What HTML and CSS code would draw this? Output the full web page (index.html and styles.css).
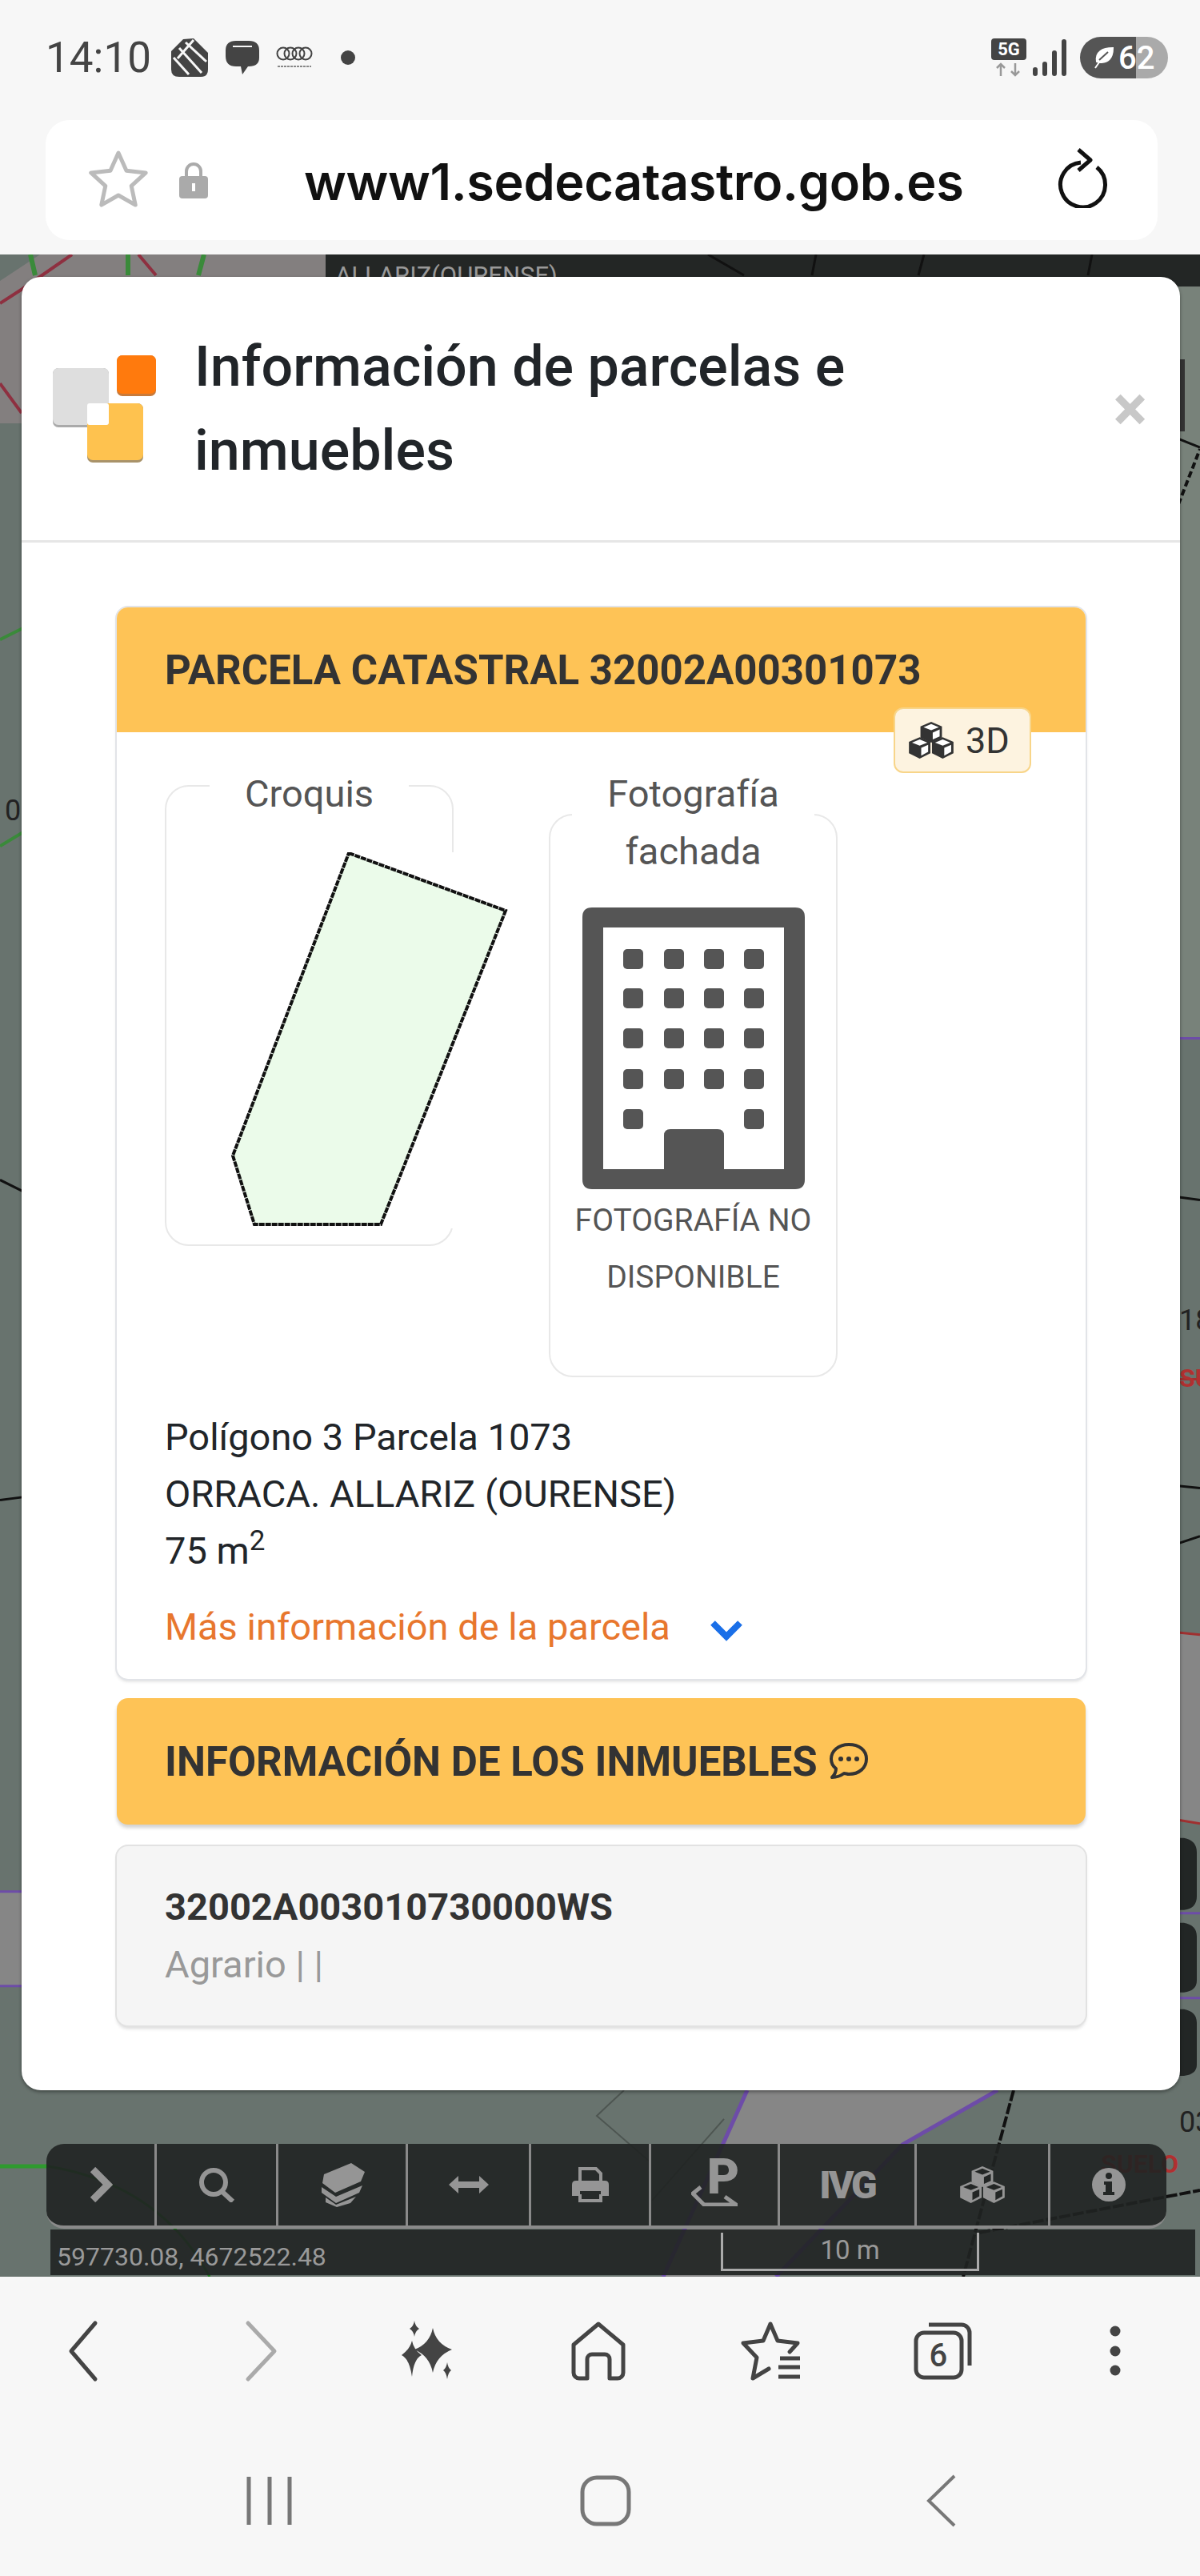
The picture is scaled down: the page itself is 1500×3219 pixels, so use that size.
FILE: index.html
```html
<!DOCTYPE html>
<html lang="es">
<head>
    <meta charset="UTF-8">
    <title>Información de parcelas e inmuebles</title>
    <link rel="stylesheet" href="styles.css">
</head>
<body>
<svg class="sprites" xmlns="http://www.w3.org/2000/svg">
    <symbol id="cubes" viewBox="0 0 60 50">
        <path d="M30 1 44 7V22L30 28 16 22V7Z" fill="currentColor"/>
        <path d="M30 4 40 8 30 12 20 8Z" class="cube-face"/>
        <path d="M32 15 41 11V20L32 24Z" class="cube-face"/>
        <path d="M15 21 29 27V42L15 49 1 42V27Z" fill="currentColor"/>
        <path d="M15 24 25 28 15 32 5 28Z" class="cube-face"/>
        <path d="M17 35 26 31V40L17 45Z" class="cube-face"/>
        <path d="M45 21 59 27V42L45 49 31 42V27Z" fill="currentColor"/>
        <path d="M45 24 55 28 45 32 35 28Z" class="cube-face"/>
        <path d="M47 35 56 31V40L47 45Z" class="cube-face"/>
    </symbol>
</svg>

<div class="screen">
    <header class="status-bar">
        <div class="status-left">
            <span class="clock">14:10</span>
            <svg class="ic-stack" viewBox="0 0 50 50"><path d="M17 2 30 1 48 19V40Q48 49 39 49H12Q2 49 2 40V17Z" fill="#444"/><path d="M20 6 46 30M12 13 40 44M5 25 24 46M30 3 10 26" stroke="#f7f7f7" stroke-width="3" fill="none"/></svg>
            <svg class="ic-bubble" viewBox="0 0 44 44"><path d="M14 1H30Q43 1 43 13V22Q43 33 30 33H29L22 43 20 33H14Q1 33 1 20V13Q1 1 14 1Z" fill="#444"/><path d="M10 8H34" stroke="#f7f7f7" stroke-width="2"/></svg>
            <svg class="ic-rings" viewBox="0 0 47 28"><g fill="none" stroke="#444" stroke-width="2"><circle cx="9" cy="9" r="7.5"/><circle cx="18" cy="9" r="7.5"/><circle cx="28" cy="9" r="7.5"/><circle cx="37" cy="9" r="7.5"/></g><path d="M2 25H44" stroke="#888" stroke-width="2" stroke-dasharray="3 1"/></svg>
            <span class="status-dot"></span>
        </div>
        <div class="status-right">
            <svg class="ic-network" viewBox="0 0 44 48"><rect width="44" height="27" rx="4" fill="#444"/><text x="22" y="21" class="network-label">5G</text><path d="M12 47V32M7 37l5-5 5 5M30 31V46M25 41l5 5 5-5" stroke="#999" stroke-width="2.5" fill="none"/></svg>
            <svg class="ic-signal" viewBox="0 0 42 46"><g stroke="#444" stroke-width="6" stroke-linecap="round"><path d="M3 43V38M15 43V31M27 43V17M39 43V3"/></g></svg>
            <div class="battery">
                <svg class="ic-leaf" viewBox="0 0 26 30"><path d="M3 28 12 15M5 20C3 8 12 3 25 3 25 14 20 24 5 20Z" fill="#fff" stroke="#fff" stroke-width="2"/><path d="M8 18 19 8" stroke="#555" stroke-width="2"/></svg>
                <span>62</span>
            </div>
        </div>
    </header>

    <div class="url-bar">
        <svg class="ic-star" viewBox="0 0 76 76"><path d="M38 4 48 26.2 72.2 28.9 54.2 45.3 59.2 69.1 38 57 16.8 69.1 21.8 45.3 3.8 28.9 28 26.2Z" fill="none" stroke="#bbb" stroke-width="5" stroke-linejoin="round"/></svg>
        <svg class="ic-lock" viewBox="0 0 36 46"><path d="M9 20V12a9 9 0 0 1 18 0V20" fill="none" stroke="#aaa" stroke-width="4"/><rect y="18" width="36" height="28" rx="4" fill="#aaa"/><rect x="16" y="27" width="4" height="10" fill="#fff"/></svg>
        <span class="url-text">www1.sedecatastro.gob.es</span>
        <svg class="ic-reload" viewBox="0 0 64 76"><path d="M50 25A28 28 0 1 1 30 19M27 3 42 16 27 29" fill="none" stroke="#111" stroke-width="5" stroke-linejoin="round"/></svg>
    </div>

    <main class="map">
        <svg class="map-canvas" viewBox="0 319 1500 2526" preserveAspectRatio="none">
            <path d="M0 319H407V530H0Z" fill="#837f7f"/>
            <path d="M0 319H50L0 352Z" fill="#68736e"/>
            <path d="M1470 319H1500V1298H1470Z" fill="#78827a"/>
            <path d="M0 2364H40V2482H0Z" fill="#868686"/>
            <path d="M1470 2040 1500 2043V2279L1470 2274Z" fill="#868686"/>
            <path d="M934 2612H1247L1128 2680 970 2845H829Z" fill="#868686"/>
            <g fill="none" stroke-width="4">
                <path d="M0 380 28 362 90 319M0 480 27 517M173 319 195 345" stroke="#8e3040"/>
                <path d="M38 319 44 345M160 319V345M255 319 248 345" stroke="#3a8a3a" stroke-width="6"/>
                <path d="M0 800 30 785M0 1058 30 1040" stroke="#3a8a3a"/>
                <path d="M0 2707H60" stroke="#2f9a2f" stroke-width="5"/>
                <path d="M60 2707Q200 2730 262 2845" stroke="#1f7a1f" stroke-width="3"/>
                <path d="M0 1475 30 1490M0 1875 30 1871M1470 1496 1500 1500M1470 1857 1500 1860M1470 1930 1500 1920" stroke="#111" stroke-width="3"/>
                <path d="M1470 548 1500 560" stroke="#111" stroke-width="3"/>
                <path d="M1473 631 1500 562" stroke="#111" stroke-dasharray="8 4"/>
                <path d="M1470 1298H1500M0 2364H30M0 2482H30M1470 2391H1500M1470 2497H1500" stroke="#6d4ca8" stroke-width="3"/>
                <path d="M1470 2040 1500 2043M1470 2274 1500 2279M1470 1724H1500" stroke="#a03030" stroke-width="3"/>
                <path d="M934 2612 829 2845M1247 2612 1128 2680 970 2845" stroke="#6d4ca8" stroke-width="5"/>
                <path d="M1267 2612 1204 2845M1224 2790 1500 2737" stroke="#111" stroke-dasharray="14 3" stroke-width="4"/>
                <path d="M780 2612 746 2644 813 2702M905 2648 815 2750" stroke="#4d5551" stroke-width="2"/>
            </g>
            <rect x="1475" y="450" width="6" height="90" fill="#333"/>
            <path d="M1470 2297H1480Q1496 2300 1496 2315V2370Q1496 2385 1480 2387H1470ZM1470 2403H1480Q1496 2406 1496 2420V2475Q1496 2488 1480 2490H1470ZM1470 2511H1480Q1496 2514 1496 2528V2580Q1496 2592 1480 2594H1470Z" fill="#222625"/>
            <text x="6" y="1026" class="map-number">0</text>
            <text x="1474" y="1662" class="map-number">18</text>
            <text x="1474" y="2664" class="map-number">03</text>
            <text x="1376" y="2715" class="map-label">SUELO</text>
            <text x="1474" y="1733" class="map-label">SUELO</text>
            <rect x="407" y="319" width="1093" height="40" fill="#232625"/>
            <text x="419" y="356" class="map-town">ALLARIZ(OURENSE)</text>
            <path d="M885 319 930 345M1020 319 1015 345M1155 319 1148 345M1365 319 1360 345" stroke="#111" stroke-width="3" fill="none"/>
        </svg>

        <section class="modal">
            <div class="modal-header">
                <svg class="modal-logo" viewBox="0 0 130 134">
                    <rect y="16" width="70" height="74" rx="7" fill="#aaa"/>
                    <rect y="16" width="70" height="71" rx="7" fill="#dedede"/>
                    <rect x="80" width="49" height="51" rx="7" fill="#c87a3a"/>
                    <rect x="80" width="49" height="48" rx="7" fill="#ff7a0d"/>
                    <rect x="43" y="60" width="70" height="74" rx="7" fill="#a8926a"/>
                    <rect x="43" y="60" width="70" height="71" rx="7" fill="#fec24f"/>
                    <rect x="43" y="60" width="27" height="27" rx="3" fill="#fff"/>
                </svg>
                <h1 class="modal-title">Información de parcelas e<br>inmuebles</h1>
                <span class="modal-close">×</span>
            </div>

            <div class="modal-body">
                <article class="info-card">
                    <h2 class="card-head">PARCELA CATASTRAL 32002A00301073</h2>
                    <a class="badge-3d">
                        <svg class="ic-cubes"><use href="#cubes"/></svg>
                        3D
                    </a>
                    <div class="card-body">
                        <div class="figures">
                            <fieldset class="figure">
                                <legend>Croquis</legend>
                                <svg class="sketch" viewBox="240 1065 402 470">
                                    <path d="M437 1066 633 1138 477 1530H319L292 1444Z" fill="#ebfbea" stroke="#111" stroke-width="4" stroke-dasharray="7 1"/>
                                </svg>
                            </fieldset>
                            <fieldset class="figure">
                                <legend>Fotografía<br>fachada</legend>
                                <svg class="building" viewBox="0 0 278 352">
                                    <path fill-rule="evenodd" d="M12 0H266Q278 0 278 12V340Q278 352 266 352H12Q0 352 0 340V12Q0 0 12 0ZM26 25V327H102V285Q102 277 110 277H169Q177 277 177 285V327H252V25Z"/>
                                    <g>
                                        <rect x="51" y="52" width="25" height="25" rx="5"/><rect x="102" y="52" width="25" height="25" rx="5"/><rect x="152" y="52" width="25" height="25" rx="5"/><rect x="202" y="52" width="25" height="25" rx="5"/>
                                        <rect x="51" y="101" width="25" height="25" rx="5"/><rect x="102" y="101" width="25" height="25" rx="5"/><rect x="152" y="101" width="25" height="25" rx="5"/><rect x="202" y="101" width="25" height="25" rx="5"/>
                                        <rect x="51" y="151" width="25" height="25" rx="5"/><rect x="102" y="151" width="25" height="25" rx="5"/><rect x="152" y="151" width="25" height="25" rx="5"/><rect x="202" y="151" width="25" height="25" rx="5"/>
                                        <rect x="51" y="202" width="25" height="25" rx="5"/><rect x="102" y="202" width="25" height="25" rx="5"/><rect x="152" y="202" width="25" height="25" rx="5"/><rect x="202" y="202" width="25" height="25" rx="5"/>
                                        <rect x="51" y="252" width="25" height="25" rx="5"/><rect x="202" y="252" width="25" height="25" rx="5"/>
                                    </g>
                                </svg>
                                <p class="no-photo">FOTOGRAFÍA NO<br>DISPONIBLE</p>
                            </fieldset>
                        </div>
                        <div class="parcel-data">
                            <div>Polígono 3 Parcela 1073</div>
                            <div>ORRACA. ALLARIZ (OURENSE)</div>
                            <div>75 m<sup>2</sup></div>
                        </div>
                        <a class="more-link">
                            Más información de la parcela
                            <svg class="ic-chevron" viewBox="0 0 42 28"><path d="M4 5 21 22 38 5" fill="none" stroke="#1a6fe8" stroke-width="8"/></svg>
                        </a>
                    </div>
                </article>

                <h2 class="card-head card-head-solo">
                    INFORMACIÓN DE LOS INMUEBLES
                    <svg class="ic-comment" viewBox="0 0 50 48"><path d="M25 3C12 3 3 11 3 21 3 26 5 30 9 33 9 38 6 42 4 44 10 44 15 42 19 39 21 39 23 40 25 40 38 40 47 32 47 21S38 3 25 3Z" fill="none" stroke="#333" stroke-width="4" stroke-linejoin="round"/><circle cx="15" cy="21" r="3" fill="#333"/><circle cx="25" cy="21" r="3" fill="#333"/><circle cx="35" cy="21" r="3" fill="#333"/></svg>
                </h2>

                <div class="property-item">
                    <strong>32002A003010730000WS</strong>
                    <span>Agrario | |</span>
                </div>
            </div>
        </section>

        <nav class="map-tools">
            <div class="tool"><svg class="tool-icon" width="30" height="44" viewBox="0 0 30 44"><path d="M5 3 24 22 5 41" fill="none" stroke="currentColor" stroke-width="9"/></svg></div>
            <div class="tool"><svg class="tool-icon" width="46" height="44" viewBox="0 0 46 44"><circle cx="19" cy="19" r="15" fill="none" stroke="currentColor" stroke-width="6"/><path d="M29 30 43 43" stroke="currentColor" stroke-width="6"/></svg></div>
            <div class="tool"><svg class="tool-icon" width="58" height="56" viewBox="0 0 58 56"><path d="M6 15 40 1 57 12 52 24 20 38 4 26Z" fill="currentColor"/><path d="M3 31 21 43 54 29 50 38 21 51 3 38ZM8 44 21 53 46 43 39 51 22 56 8 50Z" fill="currentColor"/></svg></div>
            <div class="tool"><svg class="tool-icon" width="50" height="24" viewBox="0 0 50 24"><path d="M0 12 12 1V8H38V1L50 12 38 23V16H12V23Z" fill="currentColor"/></svg></div>
            <div class="tool"><svg class="tool-icon" width="46" height="44" viewBox="0 0 46 44"><path d="M10 18V2H30L36 8V18M10 34V42H36V34" fill="none" stroke="currentColor" stroke-width="4"/><path d="M5 17H41Q46 17 46 22V36H36V30H10V36H0V22Q0 17 5 17Z" fill="currentColor"/></svg></div>
            <div class="tool tool-parking">
                <span class="tool-p">P</span>
                <svg class="tool-plane" width="58" height="26" viewBox="0 0 58 26"><path d="M12 2 2 10 16 24H56L42 14" fill="none" stroke="currentColor" stroke-width="5"/></svg>
            </div>
            <div class="tool tool-ivg">IVG</div>
            <div class="tool tool-cubes"><svg class="ic-cubes ic-cubes-tool"><use href="#cubes"/></svg></div>
            <div class="tool"><svg class="tool-icon" width="42" height="42" viewBox="0 0 42 42"><circle cx="21" cy="21" r="21" fill="currentColor"/><circle cx="21" cy="10" r="4" fill="#232625"/><path d="M15 17H25V30H28V34H14V30H17V21H15Z" fill="#232625"/></svg></div>
        </nav>

        <div class="map-info">
            <span class="coords">597730.08, 4672522.48</span>
            <div class="scale-bar">10 m</div>
        </div>
    </main>

    <footer class="bottom">
        <div class="browser-nav">
            <svg class="nav-icon" viewBox="0 0 80 80"><path d="M56 5 26 40 56 75" fill="none" stroke="#444" stroke-width="5" stroke-linecap="round" stroke-linejoin="round"/></svg>
            <svg class="nav-icon" viewBox="0 0 80 80"><path d="M32 5 65 40 32 75" fill="none" stroke="#aaa" stroke-width="5" stroke-linecap="round" stroke-linejoin="round"/></svg>
            <svg class="nav-icon" viewBox="0 0 80 80"><g fill="#444"><path d="M48 11Q52 31 72 38 52 46 48 67 44 46 25 38 44 31 48 11Z"/><path d="M22 27Q24 38 34 45 24 50 22 72 19 50 9 45 19 38 22 27Z"/><path d="M25 2Q26 9 31 12 26 15 25 22 24 15 19 12 24 9 25 2Z"/><path d="M66 54Q67 61 71 64 67 67 66 75 65 67 61 64 65 61 66 54Z"/></g></svg>
            <svg class="nav-icon" viewBox="0 0 80 80"><path d="M26 74H16a7 7 0 0 1-7-7V32L40 6 71 32V67a7 7 0 0 1-7 7H54V50a6 6 0 0 0-6-6H32a6 6 0 0 0-6 6Z" fill="none" stroke="#444" stroke-width="5" stroke-linejoin="round"/></svg>
            <svg class="nav-icon" viewBox="0 0 80 80"><path d="M40 6 49 27 74 30 64 41M40 6 31 27 6 30 23 48 18 74 38 62" fill="none" stroke="#444" stroke-width="5" stroke-linejoin="round" stroke-linecap="round"/><path d="M52 49H77M50 60H77M50 72H77" stroke="#444" stroke-width="5"/></svg>
            <div class="tabs-icon">
                <svg class="nav-icon" viewBox="0 0 80 80"><rect x="7" y="17" width="57" height="56" rx="10" fill="none" stroke="#444" stroke-width="5"/><path d="M23 7H64a10 10 0 0 1 10 10V58" fill="none" stroke="#444" stroke-width="5"/></svg>
                <span class="tabs-count">6</span>
            </div>
            <svg class="nav-icon" viewBox="0 0 80 80"><g fill="#444"><circle cx="41" cy="15" r="6.5"/><circle cx="41" cy="40" r="6.5"/><circle cx="41" cy="64" r="6.5"/></g></svg>
        </div>
        <div class="system-nav">
            <svg class="sys-icon" viewBox="0 0 80 80"><path d="M14 10V70M40 10V70M65 10V70" stroke="#777" stroke-width="5"/></svg>
            <svg class="sys-icon" viewBox="0 0 80 80"><rect x="11" y="11" width="58" height="58" rx="18" fill="none" stroke="#777" stroke-width="5"/></svg>
            <svg class="sys-icon" viewBox="0 0 80 80"><path d="M56 9 24 40 56 71" fill="none" stroke="#777" stroke-width="4"/></svg>
        </div>
    </footer>
</div>
</body>
</html>
```

FILE: styles.css
```css
*{
    box-sizing: border-box;
    padding: 0;
    margin: 0;
}
body{
    background-color: #f7f7f7;
    font-family: Roboto, "Noto Sans", sans-serif;
    color: #212529;
}
.sprites{
    display: none;
}
.cube-face{
    fill: var(--cube-face, #fff);
}
.screen{
    display: flex;
    flex-direction: column;
    width: 1500px;
    height: 3219px;
    overflow: hidden;
}

/* status bar */
.status-bar{
    display: flex;
    justify-content: space-between;
    align-items: center;
    height: 150px;
    padding: 0 40px 6px 57px;
}
.status-left, .status-right{
    display: flex;
    align-items: center;
}
.clock{
    width: 155px;
    font-size: 53px;
    color: #444;
}
.ic-stack{
    width: 50px;
    height: 50px;
}
.ic-bubble{
    width: 44px;
    height: 44px;
    margin-left: 19px;
}
.ic-rings{
    width: 47px;
    height: 28px;
    margin-left: 20px;
}
.status-dot{
    width: 18px;
    height: 18px;
    margin-left: 34px;
    border-radius: 50%;
    background-color: #444;
}
.ic-network{
    width: 44px;
    height: 48px;
}
.network-label{
    font-size: 22px;
    font-weight: 700;
    fill: #fff;
    text-anchor: middle;
}
.ic-signal{
    width: 42px;
    height: 46px;
    margin-left: 8px;
}
.battery{
    display: flex;
    align-items: center;
    width: 110px;
    height: 52px;
    margin-left: 17px;
    padding-left: 16px;
    border-radius: 26px;
    background: linear-gradient(to right, #555 64%, #aaa 64%);
    color: #fff;
    font-size: 40px;
    font-weight: 500;
}
.ic-leaf{
    width: 26px;
    height: 30px;
    margin-right: 6px;
}

/* url bar */
.url-bar{
    display: flex;
    align-items: center;
    height: 150px;
    margin: 0 53px 0 57px;
    padding: 0 62px 0 53px;
    border-radius: 30px;
    background-color: #fff;
}
.ic-star{
    width: 76px;
    height: 76px;
}
.ic-lock{
    width: 36px;
    height: 46px;
    margin-left: 38px;
}
.url-text{
    margin: 4px 0 0 120px;
    font-family: Inter, Roboto, sans-serif;
    font-size: 63px;
    font-weight: 600;
    letter-spacing: -.4px;
    color: #111;
}
.ic-reload{
    width: 64px;
    height: 76px;
    margin: -6px 0 0 auto;
}

/* map */
.map{
    position: relative;
    flex: 0 0 2527px;
    margin-top: 18px;
    background-color: #68736e;
    overflow: hidden;
}
.map-canvas{
    position: absolute;
    top: 0;
    left: 0;
    width: 100%;
    height: 100%;
}
.map-number{
    font-size: 36px;
    fill: #222;
}
.map-label{
    font-size: 32px;
    font-weight: 700;
    fill: #b03030;
}
.map-town{
    font-size: 31px;
    fill: #999;
}

/* modal */
.modal{
    position: absolute;
    top: 28px;
    left: 27px;
    width: 1448px;
    height: 2266px;
    border-radius: 24px;
    background-color: #fff;
    box-shadow: 0 2px 4px rgba(0, 0, 0, .4);
}
.modal-header{
    display: flex;
    align-items: center;
    height: 332px;
    padding: 0 41px 0 39px;
    border-bottom: 3px solid #e6e6e6;
}
.modal-logo{
    flex: 0 0 130px;
    width: 130px;
    height: 134px;
}
.modal-title{
    margin-left: 47px;
    font-size: 70px;
    font-weight: 500;
    line-height: 105px;
}
.modal-close{
    margin-left: auto;
    font-size: 80px;
    font-weight: 700;
    line-height: 1;
    color: #c8c8c8;
}
.modal-body{
    padding: 81px 118px 0 119px;
}
.info-card{
    position: relative;
    border-radius: 14px;
    box-shadow: 0 0 0 2px #e2e4e8, 0 3px 4px rgba(0, 0, 0, .15);
}
.card-head{
    display: flex;
    align-items: center;
    height: 156px;
    padding-left: 60px;
    border-radius: 14px 14px 0 0;
    background-color: #fec356;
    font-size: 51px;
    font-weight: 700;
    color: #333;
}
.card-head-solo{
    height: 158px;
    margin-top: 24px;
    border-radius: 14px;
    box-shadow: 0 4px 4px rgba(0, 0, 0, .18);
}
.badge-3d{
    position: absolute;
    top: 125px;
    right: 68px;
    display: flex;
    align-items: center;
    width: 172px;
    height: 82px;
    padding-left: 16px;
    border: 2px solid #f8d589;
    border-radius: 12px;
    background-color: #fdf3e0;
    font-size: 45px;
    color: #333;
}
.ic-cubes{
    width: 58px;
    height: 48px;
    margin-right: 14px;
    color: #333;
}
.card-body{
    padding: 21px 60px 29px;
}
.figures{
    display: flex;
    align-items: flex-start;
    gap: 119px;
}
.figure{
    width: 361px;
    min-width: 0;
    border: 2px solid #e8e8e8;
    border-radius: 30px;
    color: #555;
}
/* text sits below the line of the border, so the legend gets extra top padding */
.figure legend{
    margin: 0 auto;
    padding: 20px 44px 0;
    font-size: 47px;
    line-height: 72px;
    text-align: center;
}
.sketch{
    display: block;
    width: 402px;
    height: 470px;
    margin: 37px 0 20px 31px;
    background-color: #fff;
}
.building{
    display: block;
    width: 278px;
    height: 352px;
    margin: 34px auto 0;
    fill: #555;
}
.no-photo{
    padding: 4px 0 87px;
    font-size: 39px;
    line-height: 71px;
    text-align: center;
}
.parcel-data{
    margin-top: 39px;
    font-size: 47px;
    line-height: 71px;
}
.parcel-data sup{
    line-height: 0;
    font-size: 35px;
}
.more-link{
    display: flex;
    align-items: center;
    margin-top: 24px;
    font-size: 47px;
    line-height: 72px;
    color: #e8772e;
}
.ic-chevron{
    width: 42px;
    height: 28px;
    margin: 8px 0 0 49px;
}
.ic-comment{
    width: 50px;
    height: 48px;
    margin-left: 14px;
}
.property-item{
    display: flex;
    flex-direction: column;
    height: 224px;
    margin-top: 27px;
    padding: 40px 60px;
    border-radius: 14px;
    background-color: #f5f5f5;
    box-shadow: 0 0 0 2px #e2e2e2, 0 4px 4px rgba(0, 0, 0, .15);
    font-size: 47px;
    line-height: 72px;
}
.property-item strong{
    color: #333;
}
.property-item span{
    color: #999;
}

/* toolbar over the map */
.map-tools{
    position: absolute;
    top: 2361px;
    left: 58px;
    display: grid;
    grid-template-columns: 138px 152px 162px 154px 150px 161px 171px 167px 145px;
    width: 1400px;
    height: 106px;
    border-bottom: 4px solid #8a8a8a;
    border-radius: 22px 22px 22px 22px;
    background-color: rgba(32, 35, 34, .9);
    color: #959595;
}
.tool{
    display: flex;
    align-items: center;
    justify-content: center;
    position: relative;
    border-right: 3px solid #8a8a8a;
}
.tool:last-child{
    border-right: none;
}
.tool-parking{
    flex-direction: column;
}
.tool-p{
    margin: -8px 0 -14px 22px;
    font-size: 62px;
    font-weight: 900;
    line-height: 50px;
}
.tool-ivg{
    font-size: 48px;
    font-weight: 900;
    letter-spacing: -3px;
}
.tool-cubes{
    --cube-face: #232625;
}
.ic-cubes-tool{
    margin: 0;
    color: #959595;
}
.map-info{
    position: absolute;
    top: 2468px;
    left: 63px;
    display: flex;
    justify-content: space-between;
    width: 1431px;
    height: 57px;
    padding-right: 270px;
    background-color: rgba(32, 35, 34, .9);
    color: #999;
}
.coords{
    margin: 15px 0 0 8px;
    font-size: 32px;
}
.scale-bar{
    width: 323px;
    height: 48px;
    margin-top: 4px;
    border: 3px solid #aaa;
    border-top: none;
    font-size: 33px;
    line-height: 44px;
    text-align: center;
}

/* bottom bars */
.bottom{
    flex: 1;
}
.browser-nav{
    display: grid;
    grid-template-columns: repeat(7, 215px);
    justify-items: center;
    align-items: center;
    height: 186px;
    margin-left: -5px;
}
.nav-icon, .sys-icon{
    display: block;
    width: 80px;
    height: 80px;
}
.tabs-icon{
    position: relative;
}
.tabs-count{
    position: absolute;
    top: 21px;
    left: 24px;
    font-size: 40px;
    font-weight: 500;
    line-height: 50px;
    color: #444;
}
.system-nav{
    display: grid;
    grid-template-columns: repeat(3, 420px);
    justify-items: center;
    align-items: center;
    height: 188px;
    padding-left: 127px;
}
```
